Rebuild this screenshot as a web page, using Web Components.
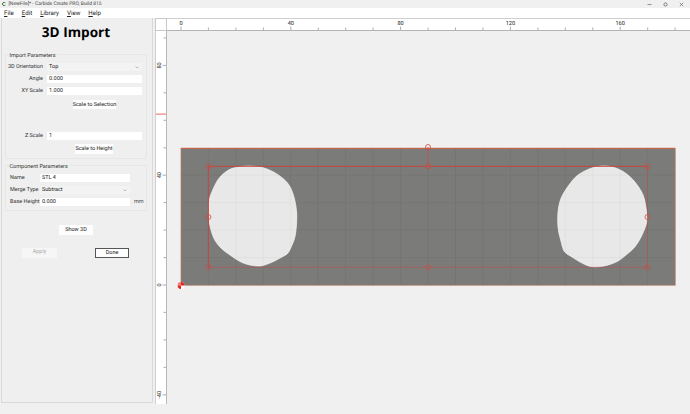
<!DOCTYPE html>
<html><head><meta charset="utf-8"><style>
html,body{margin:0;padding:0;background:#f0f0f0;}
body{width:690px;height:414px;overflow:hidden;font-family:Roboto,"Open Sans","Liberation Sans",sans-serif;color:#222;text-rendering:geometricPrecision;}
</style></head><body>
<cc-app>
  <cc-titlebar slot="title">[NewFile]* - Carbide Create PRO, Build 815</cc-titlebar>
  <cc-menubar slot="menu"></cc-menubar>
  <cc-panel slot="panel">
    <cc-group label="Import Parameters" style="height:105px">
      <cc-row label="3D Orientation" value="Top" lw="37" fw="95" select></cc-row>
      <cc-row label="Angle" value="0.000" lw="37" fw="95"></cc-row>
      <cc-row label="XY Scale" value="1.000" lw="37" fw="95"></cc-row>
      <cc-button w="43" ml="67" mt="1">Scale to Selection</cc-button>
      <cc-row label="Z Scale" value="1" lw="37" fw="95" style="margin-top:19px"></cc-row>
      <cc-button w="38" ml="69" mt="0" h="10">Scale to Height</cc-button>
    </cc-group>
    <cc-group label="Component Parameters" style="height:46px;margin-top:6px">
      <cc-row label="Name" value="STL 4" lw="26" fw="90" left></cc-row>
      <cc-row label="Merge Type" value="Subtract" lw="26" fw="90" left select></cc-row>
      <cc-row label="Base Height" value="0.000" lw="26" fw="90" left unit="mm"></cc-row>
    </cc-group>
    <cc-button w="34" ml="54" mt="14">Show 3D</cc-button>
    <cc-actions></cc-actions>
  </cc-panel>
  <cc-hruler slot="hruler"></cc-hruler>
  <cc-vruler slot="vruler"></cc-vruler>
  <cc-canvas slot="canvas"></cc-canvas>
</cc-app>
<script>
function def(name, css, html, init){
  customElements.define(name, class extends HTMLElement{
    connectedCallback(){
      if(this.shadowRoot) return;
      const r=this.attachShadow({mode:'open'});
      r.innerHTML='<style>'+css+'</style>'+(typeof html==='function'?html(this):html);
      if(init) init(this,r);
    }
  });
}
const NS='Roboto,"Open Sans","Liberation Sans",sans-serif';
def('cc-app',`:host{display:grid;width:690px;height:414px;grid-template-columns:155px 12px 1fr;grid-template-rows:8px 10px 13px 373px 10px;background:#f0f0f0;overflow:hidden}
 .t{grid-column:1/4;grid-row:1}.m{grid-column:1/4;grid-row:2}.p{grid-column:1;grid-row:3/5;display:block}
 .c{grid-column:2;grid-row:3;background:#fff;border:solid #c8c8c8;border-width:1px 1px 1px 1px;box-sizing:border-box}
 .h{grid-column:3;grid-row:3}.v{grid-column:2;grid-row:4}.w{grid-column:3;grid-row:4}`,
 `<div class="t"><slot name="title"></slot></div><div class="m"><slot name="menu"></slot></div>
  <div class="p"><slot name="panel"></slot></div><div class="c"></div><div class="h"><slot name="hruler"></slot></div>
  <div class="v"><slot name="vruler"></slot></div><div class="w"><slot name="canvas"></slot></div>`);
def('cc-titlebar',`:host{display:flex;align-items:center;height:8px;background:#f0f0f0;font:5px ${NS};color:#444;padding-left:2px;white-space:nowrap}
 .i{width:4px;height:4px;margin:0 2.5px 0 0;flex:none}.s{flex:1;min-width:0}
 .b{display:flex;gap:11px;padding-right:6px;align-items:center}`,
 `<svg class="i" viewBox="0 0 4 4"><path d="M3.4 .8A1.7 1.7 0 1 0 3.4 3.2" fill="none" stroke="#3a7a3a" stroke-width="1"/></svg><span class="s"><slot></slot></span>
 <span class="b"><svg width="5" height="5" viewBox="0 0 5 5"><path d="M.5 2.5H4.5" stroke="#777" stroke-width=".8"/></svg>
 <svg width="5" height="5" viewBox="0 0 5 5"><circle cx="2.5" cy="2.5" r="1.6" fill="none" stroke="#666" stroke-width=".8"/></svg>
 <svg width="5" height="5" viewBox="0 0 5 5"><path d="M.8 .8L4.2 4.2M4.2 .8L.8 4.2" stroke="#666" stroke-width=".7"/></svg></span>`);
def('cc-menubar',`:host{display:flex;align-items:center;height:10px;background:#fff;font:6.2px ${NS};color:#222;padding-left:4px;gap:8px}
 u{text-decoration:underline;text-underline-offset:1px;text-decoration-thickness:.5px}`,
 `<span><u>F</u>ile</span><span><u>E</u>dit</span><span><u>L</u>ibrary</span><span><u>V</u>iew</span><span><u>H</u>elp</span>`);
def('cc-panel',`:host{display:flex;flex-direction:column;box-sizing:border-box;width:152px;height:385px;margin-left:1px;padding:0 5px 0 3px;background:#efefef;border:solid #d9d9d9;border-width:0 1px 1px 1px;font:5.5px ${NS};color:#222}
 h1{margin:0;padding-top:4px;height:36px;box-sizing:border-box;text-align:center;font:700 13.6px/20px "Open Sans","Liberation Sans",sans-serif;color:#000}`,
 `<h1>3D Import</h1><slot></slot>`);
def('cc-group',`:host{display:block;box-sizing:border-box;position:relative;border:1px solid #e6e6e6;border-radius:1px;padding:8px 4px 0 0;font:5.5px ${NS}}
 .l{position:absolute;left:3.5px;top:-2px;font-size:5.5px;line-height:7px;color:#333;background:#efefef;padding-right:1px;white-space:nowrap}
 .r{display:flex;flex-direction:column;gap:3.6px}`,
 h=>`<div class="l">${h.getAttribute('label')}</div><div class="r"><slot></slot></div>`);
def('cc-row',`:host{display:flex;align-items:flex-start;height:8.4px;gap:4px;font:5.5px ${NS};color:#333;white-space:nowrap}
 .l{text-align:right;flex:none;line-height:9.6px}.f{position:relative;flex:none;box-sizing:border-box;height:8.4px;background:#fff;padding-left:2px;line-height:9.6px;color:#222}
 .f.s{background:#f3f3f3}.a{position:absolute;right:3px;top:2.8px}.u{margin-left:0;color:#444;line-height:9.6px}`,
 h=>{const g=k=>h.getAttribute(k),s=h.hasAttribute('select');
 return `<span class="l" style="width:${+g('lw')}px;${h.hasAttribute('left')?'text-align:left;margin-left:4px':''}">${g('label')}</span>
 <span class="f ${s?'s':''}" style="width:${g('fw')}px">${g('value')}${s?'<svg class="a" width="4" height="3" viewBox="0 0 4 3"><path d="M.5 .5L2 2L3.5 .5" fill="none" stroke="#999" stroke-width=".6"/></svg>':''}</span>${g('unit')?`<span class="u">${g('unit')}</span>`:''}`});
def('cc-button',`:host{display:block;font:5.5px ${NS};color:#222}
 div{box-sizing:border-box;background:#fdfdfd;text-align:center;white-space:nowrap;display:flex;justify-content:center;align-items:center}`,
 h=>`<div style="width:${h.getAttribute('w')}px;height:${h.getAttribute('h')||9.5}px;margin-left:${h.getAttribute('ml')}px;margin-top:${h.getAttribute('mt')||0}px"><slot></slot></div>`);
def('cc-actions',`:host{display:flex;justify-content:space-between;margin:13.5px 0 0 17px;width:107px;font:5.5px ${NS}}
 div{box-sizing:border-box;height:10px;line-height:9.5px;text-align:center}
 .a{width:35px;background:#f6f6f6;color:#aaa}.d{width:34px;background:#fdfdfd;border:1px solid #555;color:#222;line-height:8px}`,
 `<div class="a">Apply</div><div class="d">Done</div>`);
const X0=181,Y0=285,S=2.745;
function xp(u){return X0+u*S}function yp(u){return Y0-u*S}
function smooth(pts){const n=pts.length;let d=`M${pts[0][0]} ${pts[0][1]}`;
 for(let i=0;i<n;i++){const a=pts[(i-1+n)%n],b=pts[i],c=pts[(i+1)%n],e=pts[(i+2)%n];
  d+=` C${(b[0]+(c[0]-a[0])/6).toFixed(1)} ${(b[1]+(c[1]-a[1])/6).toFixed(1)} ${(c[0]-(e[0]-b[0])/6).toFixed(1)} ${(c[1]-(e[1]-b[1])/6).toFixed(1)} ${c[0]} ${c[1]}`}
 return d+'Z'}
def('cc-hruler',`:host{display:block;height:13px;background:#fff;box-sizing:border-box;border-top:1px solid #cfcfcf;border-bottom:1px solid #b4b4b4;margin-right:0}svg{display:block}`,
 ()=>{let s='<svg width="523" height="11" viewBox="167 19 523 11" font-family=\'Roboto,"Open Sans",sans-serif\' font-size="5.6" fill="#222">';
  for(let u=0;u<=180;u+=10){const x=xp(u).toFixed(1),maj=u%40==0;s+=`<line x1="${x}" x2="${x}" y1="${maj?26.5:27.5}" y2="30" stroke="#999" stroke-width=".8"/>`;
   if(maj)s+=`<text x="${x}" y="25" text-anchor="middle">${u}</text>`}
  return s+'</svg>'});
def('cc-vruler',`:host{display:block;height:373px;background:#fff;box-sizing:border-box;border:solid #b8b8b8;border-width:0 1.5px 0 0;border-left:1px solid #cfcfcf}svg{display:block}
 `,()=>{let s='<svg width="10" height="373" viewBox="156 31 10 373" font-family=\'Roboto,"Open Sans",sans-serif\' font-size="5.6" fill="#222">';
  for(let u=-40;u<=90;u+=10){const y=yp(u).toFixed(1),maj=u%40==0;s+=`<line y1="${y}" y2="${y}" x1="${maj?162.5:163.5}" x2="166" stroke="#999" stroke-width=".8"/>`;
   if(maj)s+=`<text transform="translate(161 ${y}) rotate(-90)" text-anchor="middle">${u}</text>`}
  s+='<rect x="156" y="113.6" width="10" height="1" fill="#e8675c"/>';
  return s+'</svg>'});
def('cc-canvas',`:host{display:block;height:373px;position:relative;background:#f0f0f0}svg{display:block}`,
 ()=>{let s='<svg width="523" height="373" viewBox="167 31 523 373">';
  const A=smooth([[250,166],[262,167.5],[273,171.7],[283,178.5],[290,186.7],[294.5,199],[296.7,213],[296.4,226],[295,236.7],[292,245],[288,253],[281,257.5],[273,261.7],[266,264.5],[260,266],[250,265],[240,261.5],[230,255],[221,248],[214,238.5],[210,226],[208.7,213],[209.5,199],[215,185],[221,176],[230,169.3],[240,166.8]]);
  const B=smooth([[605,166],[592,168],[578,175],[569,185],[561.7,196.7],[558.5,208],[557.7,220],[558.5,231],[560.7,240],[562.5,247],[565,252.3],[572,257],[582,263],[591.7,266.7],[604,266],[616.7,261.7],[626,255],[635,246.7],[642,235],[646.7,221.7],[646,208],[643,195],[636.5,184],[628,175],[617,168.5]]);
  s+=`<defs><clipPath id="h"><path d="${A}"/><path d="${B}"/></clipPath></defs>`;
  s+='<rect x="181" y="148.5" width="494.2" height="136.7" fill="#7b7b79"/>';
  for(let u=10;u<180;u+=10){const x=xp(u).toFixed(1);s+=`<line x1="${x}" x2="${x}" y1="149" y2="285" stroke="#727270" stroke-width=".6"/>`}
  for(let u=10;u<50;u+=10){const y=yp(u).toFixed(1);s+=`<line y1="${y}" y2="${y}" x1="181" x2="675" stroke="#727270" stroke-width=".6"/>`}
  for(const d of [A,B]) s+=`<path d="${d}" fill="#e8e8e8" stroke="#f6f6f6" stroke-width=".7"/>`;
  s+='<g clip-path="url(#h)">';
  for(let u=10;u<180;u+=10){const x=xp(u).toFixed(1);s+=`<line x1="${x}" x2="${x}" y1="149" y2="285" stroke="#dcdcdc" stroke-width=".6"/>`}
  for(let u=10;u<50;u+=10){const y=yp(u).toFixed(1);s+=`<line y1="${y}" y2="${y}" x1="181" x2="675" stroke="#dcdcdc" stroke-width=".6"/>`}
  s+='</g>';
  s+='<rect x="181" y="148.2" width="494.2" height="137" fill="none" stroke="#b97a5e" stroke-width=".7"/>';
  s+='<line x1="181" x2="675" y1="148.4" y2="148.4" stroke="#c9593f" stroke-width=".9"/>';
  s+='<line x1="208.4" x2="647.5" y1="166.3" y2="166.3" stroke="#c8463e" stroke-width="1"/><line x1="208.4" x2="208.4" y1="166.3" y2="267.3" stroke="#c8463e" stroke-width="1"/>';
  s+='<line x1="208.4" x2="647.5" y1="267.3" y2="267.3" stroke="#b9534c" stroke-width=".6"/><line x1="647.5" x2="647.5" y1="166.3" y2="267.3" stroke="#b9534c" stroke-width=".6"/>';
  s+='<line x1="428" x2="428" y1="147" y2="166.3" stroke="#c8564e" stroke-width=".8"/>';
  for(const [x,y] of [[208.4,166.3],[208.4,217],[208.4,267.3],[428,166.3],[428,267.3],[647.5,166.3],[647.5,217],[647.5,267.3],[428,147]])
    s+=`<circle cx="${x}" cy="${y}" r="2.5" fill="none" stroke="#cf4a42" stroke-width=".8"/>`;
  s+='<circle cx="181" cy="285.5" r="3.4" fill="#fff"/><path d="M181 285.5V282.1A3.4 3.4 0 0 1 184.4 285.5ZM181 285.5V288.9A3.4 3.4 0 0 1 177.6 285.5Z" fill="#e8201c"/><path d="M181 285.5V282.1A3.4 3.4 0 0 0 177.6 285.5Z" fill="#e8201c" opacity=".6"/>';
  return s+'</svg>'});
</script>
</body></html>
